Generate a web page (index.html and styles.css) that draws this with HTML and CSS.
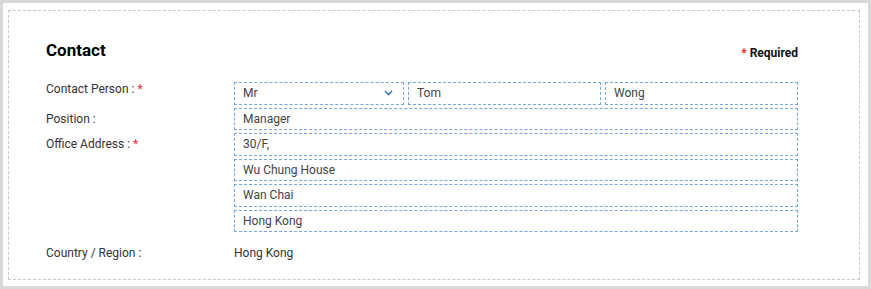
FILE: index.html
```html
<!DOCTYPE html>
<html>
<head>
<meta charset="utf-8">
<link rel="stylesheet" href="styles.css">
</head>
<body>
<div class="frame">
  <div class="panel">
    <div class="head">
      <h2 class="title">Contact</h2>
      <div class="req"><span class="star">*</span> Required</div>
    </div>
    <div class="form">
      <div class="label first">Contact Person : <span class="star">*</span></div>
      <div class="fields name-row">
        <div class="box select">
          <span>Mr</span>
          <svg class="chev" width="9" height="6" viewBox="0 0 9 6"><path d="M1 1 L4.5 4.5 L8 1" fill="none" stroke="#3a78c9" stroke-width="1.6"/></svg>
        </div>
        <div class="box">Tom</div>
        <div class="box">Wong</div>
      </div>

      <div class="label">Position :</div>
      <div class="fields">
        <div class="box">Manager</div>
      </div>

      <div class="label">Office Address : <span class="star">*</span></div>
      <div class="fields stack">
        <div class="box">30/F,</div>
        <div class="box">Wu Chung House</div>
        <div class="box">Wan Chai</div>
        <div class="box">Hong Kong</div>
      </div>

      <div class="label country">Country / Region :</div>
      <div class="value country">Hong Kong</div>
    </div>
  </div>
</div>
</body>
</html>
```

FILE: styles.css
```css
html, body {
  margin: 0;
  padding: 0;
  background: #ffffff;
}
body {
  font-family: Roboto, "Liberation Sans", Arial, sans-serif;
  color: #333333;
  font-size: 12px;
}
.frame {
  box-sizing: border-box;
  width: 871px;
  height: 289px;
  border: 3px solid #d9d9d9;
  padding: 7px 8px 6px 5px;
}
.panel {
  box-sizing: border-box;
  height: 100%;
  border: 1px dashed #c8c8c8;
  padding: 29px 61px 0 37px;
}
.head {
  display: flex;
  justify-content: space-between;
  align-items: flex-end;
}
.title {
  margin: 0;
  font-size: 17px;
  font-weight: 700;
  color: #000;
  line-height: 20px;
}
.req {
  font-size: 12px;
  font-weight: 700;
  color: #111;
  line-height: 14px;
}
.star {
  color: #e8282b;
}
.form {
  display: grid;
  grid-template-columns: 188px 1fr;
  row-gap: 3px;
  margin-top: 22px;
}
.label {
  line-height: 22.5px;
  align-self: start;
}
.label.first {
  line-height: 17px;
  margin-top: -1px;
}
.fields {
  display: flex;
  flex-direction: column;
  gap: 3px;
}
.name-row {
  display: grid;
  grid-template-columns: 170px 1fr 1fr;
  column-gap: 4px;
}
.box {
  box-sizing: border-box;
  height: 22.5px;
  border: 1px dashed #79a6df;
  padding: 0 8px;
  line-height: 20.5px;
  color: #444;
}
.select {
  display: flex;
  justify-content: space-between;
  align-items: center;
  padding-right: 10px;
}
.chev {
  display: block;
}
.country {
  margin-top: 10px;
  line-height: 17px;
}
.value {
  color: #333;
}
```
